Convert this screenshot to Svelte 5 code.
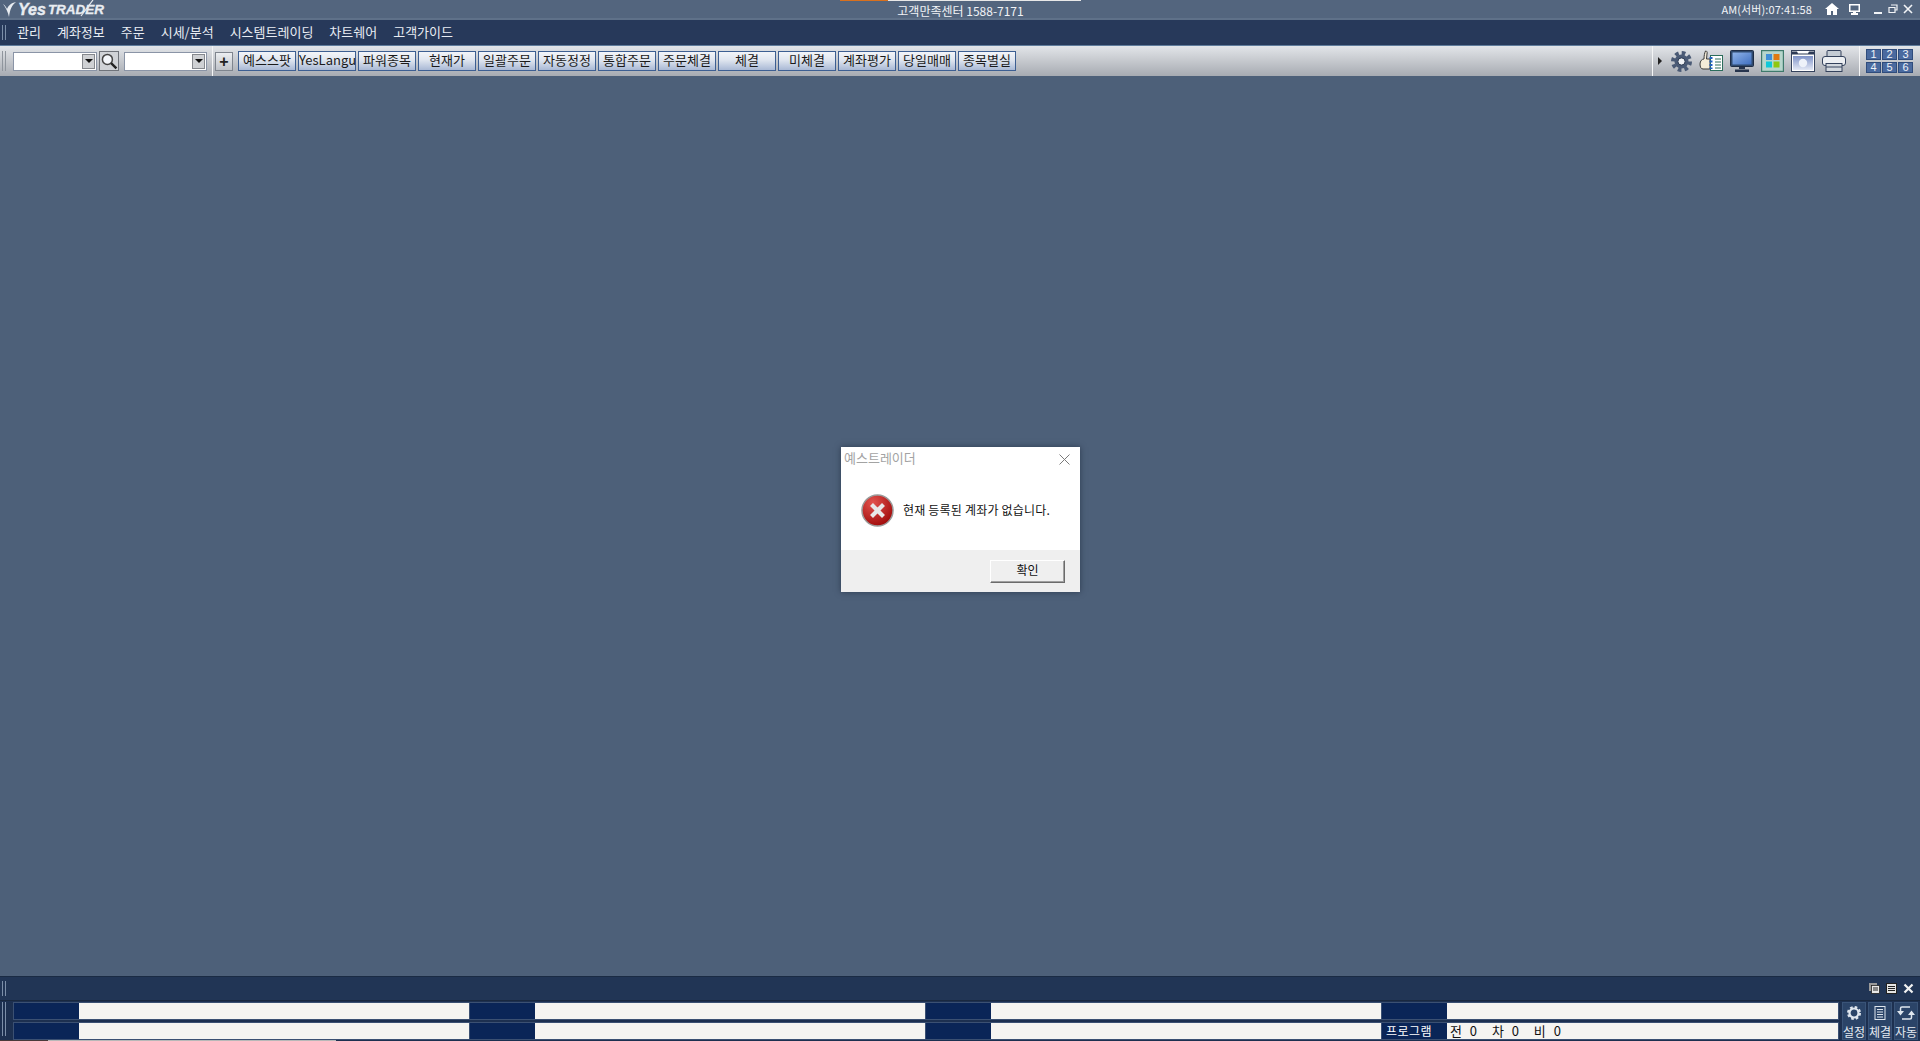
<script>
  const menus = ['관리', '계좌정보', '주문', '시세/분석', '시스템트레이딩', '차트쉐어', '고객가이드'];
  const quick = ['예스스팟', 'YesLangu', '파워종목', '현재가', '일괄주문', '자동정정', '통합주문', '주문체결', '체결', '미체결', '계좌평가', '당일매매', '종목별실'];
  const pages = [1, 2, 3, 4, 5, 6];
  const tickers = [
    [{ label: '' }, { label: '' }, { label: '' }, { label: '' }],
    [{ label: '' }, { label: '' }, { label: '' }, { label: '프로그램', value: '전 0  차 0  비 0' }]
  ];
</script>

<div class="app">
  <header class="titlebar">
    <div class="logo">
      <svg width="14" height="16" viewBox="0 0 14 16">
        <path d="M0 2c2 1 3 3 4 5 1-3 4-6 9-7-4 3-6 7-7 15C5 10 3 6 0 2z" fill="#e8ecf1"/>
      </svg>
      <span class="logo-yes">Yes</span>
      <span class="logo-trader">TRADER</span>
      <svg class="logo-slash" width="14" height="18" viewBox="0 0 14 18">
        <path d="M1 17L13 1" stroke="#e8ecf1" stroke-width="1.200" fill="none"/>
      </svg>
    </div>
    <div class="center-tab">
      <div class="tab-strip"><span class="tab-orange"></span><span class="tab-white"></span></div>
      <span class="center-text">고객만족센터 1588-7171</span>
    </div>
    <div class="sys">
      <span class="clock">AM(서버):07:41:58</span>
      <svg class="home" width="14" height="12" viewBox="0 0 14 12">
        <path d="M7 0L0 6h2v6h4V8h2v4h4V6h2z" fill="#fff"/>
      </svg>
      <svg class="screen" width="11" height="11" viewBox="0 0 11 11">
        <path d="M0 0h11v8H7v1h2v2H2V9h2V8H0zM1.500 1.500v5h8v-5z" fill="#fff"/>
      </svg>
      <svg class="win" width="10" height="10" viewBox="0 0 10 10"><path d="M1 8h8v2H1z" fill="#f2f4f7"/></svg>
      <svg class="win" width="10" height="10" viewBox="0 0 10 10"><path d="M3 1h6v5H7M1 3.500h6v5H1z" fill="none" stroke="#f2f4f7" stroke-width="1.200"/></svg>
      <svg class="win" width="10" height="10" viewBox="0 0 10 10"><path d="M1 1l8 8M9 1l-8 8" stroke="#f2f4f7" stroke-width="1.600"/></svg>
    </div>
  </header>

  <nav class="menubar">
    <span class="grip"></span>
    {#each menus as m}
      <span class="menu">{m}</span>
    {/each}
  </nav>

  <div class="toolbar">
    <span class="grip light"></span>
    <div class="combo"><span class="drop"><i></i></span></div>
    <button class="search">
      <svg width="18" height="18" viewBox="0 0 17 17">
        <circle cx="7" cy="7" r="4.700" fill="#f4f7fb" stroke="#444" stroke-width="1.400"/>
        <path d="M10.500 10.500l5 5" stroke="#222" stroke-width="2.200"/>
      </svg>
    </button>
    <div class="combo second"><span class="drop"><i></i></span></div>
    <span class="vline"></span>
    <button class="plus">+</button>
    <div class="quick">
      {#each quick as q}
        <button class="qbtn">{q}</button>
      {/each}
    </div>
    <span class="spacer"></span>
    <span class="vline"></span>
    <span class="arrow"></span>
    <div class="tools">
      <svg width="21" height="21" viewBox="0 0 21 21">
        <circle cx="10.500" cy="10.500" r="8.500" fill="none" stroke="#4a5a75" stroke-width="4" stroke-dasharray="3.600 3.070"/>
        <circle cx="10.500" cy="10.500" r="7" fill="#4a5a75"/>
        <circle cx="10.500" cy="10.500" r="3.600" fill="#f0f2f5" stroke="#2d3b52"/>
      </svg>
      <svg width="24" height="22" viewBox="0 0 24 22">
        <path d="M5 9c0-3 .5-6 1.500-8 1.500 0 2 1 1.500 3L7.500 9H11v10H4c-2 0-3-2-3-5s2-5 4-5z" fill="#f5ecd9" stroke="#3a3a3a"/>
        <rect x="11.500" y="5.500" width="12" height="15" fill="#fff" stroke="#2b6d5b"/>
        <path d="M16 9h6M16 12h6M16 15h6M16 18h6" stroke="#2b6d5b"/>
        <path d="M12 7v12" stroke="#1f5fc0" stroke-width="3" stroke-dasharray="2 1.500"/>
      </svg>
      <svg width="24" height="22" viewBox="0 0 24 22">
        <defs>
          <linearGradient id="scr" x1="0" y1="0" x2="1" y2="1">
            <stop offset="0" stop-color="#8fb3e8"/>
            <stop offset="1" stop-color="#3f6fc0"/>
          </linearGradient>
          <linearGradient id="cam" x1="0" y1="0" x2="0" y2="1">
            <stop offset="0" stop-color="#7f93c8"/>
            <stop offset="1" stop-color="#e4e9f5"/>
          </linearGradient>
        </defs>
        <rect x=".5" y=".5" width="23" height="16" rx="1" fill="#2f4a6e" stroke="#1f2d45"/>
        <rect x="2.500" y="2.500" width="19" height="12" fill="url(#scr)"/>
        <path d="M9 17h6v2H9zM5 19.500h14V22H5z" fill="#26344d"/>
      </svg>
      <svg width="23" height="22" viewBox="0 0 23 22">
        <rect x=".5" y=".5" width="22" height="21" fill="#b7d6cc" stroke="#3f7a6c" stroke-width="1.400"/>
        <rect x="5" y="4" width="6" height="6" fill="#3f8fd8"/>
        <rect x="12.500" y="4" width="6" height="6" fill="#e07a10"/>
        <rect x="5" y="11.500" width="6" height="6" fill="#10c8d8"/>
        <rect x="12.500" y="11.500" width="6" height="6" fill="#90c810"/>
      </svg>
      <svg width="24" height="22" viewBox="0 0 24 22">
        <rect x=".5" y=".5" width="23" height="21" fill="#fff" stroke="#34425c"/>
        <rect x="2" y="6" width="20" height="14" fill="url(#cam)"/>
        <path d="M1 1.500h5l1 2h10l1-2h5v3H1z" fill="#2d3a55"/>
        <circle cx="12" cy="13" r="4.200" fill="#eef2f9"/>
      </svg>
      <svg width="24" height="22" viewBox="0 0 24 22">
        <rect x="5" y=".5" width="14" height="7" rx="1" fill="#c4ccd4" stroke="#34425c"/>
        <rect x=".5" y="6.500" width="23" height="9" rx="2.500" fill="#eceff2" stroke="#34425c"/>
        <rect x="4" y="13.500" width="16" height="8" fill="#d2d8de" stroke="#34425c"/>
        <path d="M4 17h16" stroke="#34425c"/>
      </svg>
    </div>
    <span class="vline"></span>
    <div class="pages">
      {#each pages as p}
        <span class="page">{p}</span>
      {/each}
    </div>
  </div>

  <main class="desk">
    <div class="dialog">
      <div class="dlg-head">
        <span class="dlg-title">예스트레이더</span>
        <svg width="11" height="11" viewBox="0 0 11 11"><path d="M.5.500l10 10M10.500.500l-10 10" stroke="#7a7a7a" fill="none"/></svg>
      </div>
      <div class="dlg-body">
        <svg width="33" height="33" viewBox="0 0 33 33">
          <defs>
            <radialGradient id="err" cx="35%" cy="25%" r="85%">
              <stop offset="0" stop-color="#e2534e"/>
              <stop offset="1" stop-color="#9b0505"/>
            </radialGradient>
          </defs>
          <circle cx="16.500" cy="16.500" r="15.500" fill="url(#err)" stroke="#9a9a9a" stroke-width="1.500"/>
          <path d="M10.500 10.500l12 12M22.500 10.500l-12 12" stroke="#e8e8e8" stroke-width="4.200"/>
        </svg>
        <span class="dlg-msg">현재 등록된 계좌가 없습니다.</span>
      </div>
      <div class="dlg-foot">
        <button class="ok">확인</button>
      </div>
    </div>
  </main>

  <div class="dock">
    <span class="grip"></span>
    <span class="spacer"></span>
    <svg class="dock-ico" width="11" height="11" viewBox="0 0 11 11">
      <rect x="0" y="0" width="8" height="8" fill="#999"/>
      <rect x="2.500" y="2.500" width="8" height="8" fill="#e8e8e8" stroke="#222" stroke-width=".8"/>
      <path d="M4 5h5M4 7h5" stroke="#222"/>
    </svg>
    <svg class="dock-ico" width="11" height="11" viewBox="0 0 11 11">
      <rect x=".5" y=".5" width="10" height="10" fill="#e4e4e4" stroke="#222"/>
      <path d="M2 3.500h7M2 5.500h7M2 7.500h7" stroke="#222"/>
    </svg>
    <svg class="dock-ico" width="11" height="11" viewBox="0 0 11 11">
      <path d="M1.500 1.500l8 8M9.500 1.500l-8 8" stroke="#f2f2f2" stroke-width="2.200"/>
    </svg>
  </div>

  <footer class="status">
    <span class="grip tall"></span>
    <div class="rows">
      {#each tickers as row}
        <div class="row">
          {#each row as cell}
            <div class="cell">
              <span class="cell-label">{cell.label}</span>
              <span class="cell-value">{cell.value ?? ''}</span>
            </div>
          {/each}
        </div>
      {/each}
    </div>
    <div class="side">
      <div class="side-btn">
        <svg width="14" height="14" viewBox="0 0 14 14">
          <circle cx="7" cy="7" r="5.500" fill="none" stroke="#dfe6ee" stroke-width="3" stroke-dasharray="2.400 1.920"/>
          <circle cx="7" cy="7" r="4.500" fill="none" stroke="#dfe6ee" stroke-width="2.200"/>
        </svg>
        <span>설정</span>
      </div>
      <div class="side-btn">
        <svg width="14" height="14" viewBox="0 0 14 14">
          <rect x="2" y=".5" width="10" height="13" fill="none" stroke="#dfe6ee"/>
          <path d="M4 3.500h6M4 6h6M4 8.500h6M4 11h6" stroke="#dfe6ee"/>
        </svg>
        <span>체결</span>
      </div>
      <div class="side-btn">
        <svg width="18" height="14" viewBox="0 0 18 14">
          <path d="M3.500 5V2.500a1.500 1.500 0 0 1 1.500-1.500h8M14.500 9v2.500a1.500 1.500 0 0 1-1.500 1.500H5" fill="none" stroke="#dfe6ee" stroke-width="1.500"/>
          <path d="M0 5h7L3.500 9.500zM11 9h7L14.500 4.500z" fill="#dfe6ee"/>
        </svg>
        <span>자동</span>
      </div>
    </div>
  </footer>
  <div class="baseline"><span class="seg-brown"></span><span class="seg-gray"></span></div>
</div>

<style>
  :global(body) {
    margin: 0;
    background: #4d6079;
    overflow: hidden;
  }

  .app {
    height: 1041px;
    display: flex;
    flex-direction: column;
    font-family: "Noto Sans CJK KR", "Liberation Sans", sans-serif;
    font-size: 13px;
    overflow: hidden;
  }

  .titlebar {
    height: 20px;
    flex-shrink: 0;
    display: flex;
    align-items: center;
    position: relative;
    background: #53657e;
    border-bottom: 2px solid #5f7189;
    box-sizing: border-box;
  }

  .logo {
    display: flex;
    align-items: center;
    padding-left: 3px;
    padding-top: 1px;
    color: #e8ecf1;
    font-family: "Liberation Sans", sans-serif;
    font-style: italic;
    font-weight: 700;
    position: relative;
  }

  .logo svg {
    margin-right: 1px;
  }

  .logo-yes {
    font-size: 16px;
    line-height: 17px;
    margin-right: 2px;
    -webkit-text-stroke: .4px #e8ecf1;
  }

  .logo-trader {
    font-size: 13.500px;
    line-height: 17px;
    -webkit-text-stroke: .3px #e8ecf1;
  }

  .logo .logo-slash {
    position: absolute;
    left: 80px;
    top: -1px;
  }

  .center-tab {
    position: absolute;
    left: 840px;
    top: 0;
    width: 241px;
    display: flex;
    flex-direction: column;
    align-items: center;
  }

  .tab-strip {
    width: 100%;
    height: 1px;
    display: flex;
  }

  .tab-orange {
    width: 48px;
    background: #d8701e;
  }

  .tab-white {
    flex: 1;
    background: #e8e8e8;
  }

  .center-text {
    margin-top: 2px;
    color: #f1f3f6;
    font-size: 12px;
    line-height: 16px;
  }

  .sys {
    margin-left: auto;
    display: flex;
    align-items: center;
    padding-right: 7px;
    color: #f1f3f6;
  }

  .clock {
    margin-right: 13px;
    font-size: 11px;
    letter-spacing: .1px;
  }

  .home {
    margin-right: 10px;
  }

  .screen {
    margin-right: 13px;
  }

  .win {
    margin-left: 5px;
  }

  .win:nth-of-type(3) {
    margin-left: 0;
  }

  .menubar {
    height: 26px;
    flex-shrink: 0;
    display: flex;
    align-items: center;
    gap: 16px;
    background: #27395a;
    color: #e9edf3;
    box-sizing: border-box;
    border-bottom: 1px solid #5f7c9c;
  }

  .menu {
    line-height: 22px;
    padding-bottom: 2px;
  }

  .grip {
    width: 4px;
    height: 15px;
    margin-left: 2px;
    margin-right: -5px;
    flex-shrink: 0;
    border-left: 1px solid #7b8ea8;
    border-right: 1px solid #7b8ea8;
    box-sizing: border-box;
  }

  .grip.light {
    height: 20px;
    margin-right: 0;
    border-color: #8f959d;
  }

  .grip.tall {
    height: 34px;
    margin-right: 0;
    margin-left: 2px;
  }

  .toolbar {
    height: 30px;
    flex-shrink: 0;
    display: flex;
    align-items: center;
    background: linear-gradient(#e2e5e9, #c8cbd0 45%, #a7abb2);
    box-sizing: border-box;
  }

  .combo {
    width: 84px;
    height: 19px;
    margin-left: 7px;
    background: #fff;
    border: 1px solid #8a94a6;
    box-sizing: border-box;
    display: flex;
    justify-content: flex-end;
    align-items: center;
    padding-right: 1px;
  }

  .combo.second {
    width: 83px;
    margin-left: 5px;
  }

  .drop {
    width: 13px;
    height: 15px;
    background: #cfd1d4;
    border: 1px solid #85888d;
    box-sizing: border-box;
    display: flex;
    align-items: center;
    justify-content: center;
  }

  .drop i {
    border-left: 4px solid transparent;
    border-right: 4px solid transparent;
    border-top: 4px solid #111;
  }

  .search {
    width: 20px;
    height: 20px;
    margin-left: 2px;
    padding: 0;
    background: #d0d3d7;
    border: 1px solid #6f737a;
    display: flex;
    align-items: center;
    justify-content: center;
  }

  .vline {
    width: 1px;
    height: 30px;
    background: #f4f5f6;
    flex-shrink: 0;
  }

  .combo.second + .vline {
    margin-left: 5px;
  }

  .plus {
    width: 18px;
    height: 19px;
    margin-left: 2px;
    padding: 0;
    background: linear-gradient(#eceef1, #bfc3c9);
    border: 1px solid #7f858e;
    font: 700 16px/15px "Liberation Sans", sans-serif;
    color: #222;
  }

  .quick {
    display: flex;
    gap: 2px;
    margin-left: 5px;
  }

  .qbtn {
    width: 58px;
    height: 20px;
    padding: 0 0 2px;
    background: linear-gradient(#f3f5f9, #dfe5ef 45%, #a9b9d5);
    border: 1px solid #3d5f92;
    color: #1a1a1a;
    font-family: "Noto Sans CJK KR", "Liberation Sans", sans-serif;
    font-size: 13px;
    line-height: 16px;
    white-space: nowrap;
  }

  .spacer {
    flex: 1;
  }

  .arrow {
    width: 0;
    height: 0;
    margin-left: 5px;
    border-left: 4px solid #222;
    border-top: 4px solid transparent;
    border-bottom: 4px solid transparent;
  }

  .tools {
    display: flex;
    align-items: center;
    gap: 7px;
    margin-left: 9px;
    margin-right: 13px;
  }

  .pages {
    display: grid;
    grid-template-columns: repeat(3, 15px);
    grid-auto-rows: 11px;
    gap: 2px 1px;
    margin-left: 6px;
    margin-right: 7px;
  }

  .page {
    display: flex;
    align-items: center;
    justify-content: center;
    background: #4a6a9f;
    border: 1px solid #2f4c7c;
    box-sizing: border-box;
    color: #eef2f8;
    font: 11px/9px "Liberation Sans", sans-serif;
  }

  .desk {
    flex: 1;
    position: relative;
    background: #4d6079;
  }

  .dialog {
    position: absolute;
    left: 841px;
    top: 371px;
    width: 239px;
    height: 145px;
    display: flex;
    flex-direction: column;
    background: #fff;
    box-shadow: 0 0 6px rgba(20, 30, 45, .55);
  }

  .dlg-head {
    height: 24px;
    display: flex;
    align-items: center;
    justify-content: space-between;
    padding: 0 10px 0 3px;
  }

  .dlg-title {
    color: #a3a3a3;
    font-size: 13px;
    line-height: 20px;
    padding-bottom: 3px;
  }

  .dlg-body {
    flex: 1;
    display: flex;
    align-items: center;
    padding-left: 20px;
    gap: 9px;
  }

  .dlg-msg {
    color: #111;
    font-size: 12px;
    letter-spacing: .2px;
    line-height: 18px;
    padding-bottom: 2px;
  }

  .dlg-foot {
    height: 42px;
    background: #efefef;
    display: flex;
    justify-content: flex-end;
    align-items: center;
    padding-right: 15px;
  }

  .ok {
    width: 75px;
    height: 23px;
    padding: 0 0 3px;
    background: #efefef;
    border: 1px solid;
    border-color: #fff #6b6b6b #6b6b6b #fff;
    box-shadow: inset -1px -1px 0 #a0a0a0;
    color: #111;
    font-family: "Noto Sans CJK KR", sans-serif;
    font-size: 12px;
    line-height: 16px;
  }

  .dock {
    height: 25px;
    flex-shrink: 0;
    display: flex;
    align-items: center;
    gap: 6px;
    padding-right: 6px;
    background: #213555;
    border-top: 1px solid #1a2b44;
    border-bottom: 1px solid #19283f;
    box-sizing: border-box;
  }

  .dock .grip {
    margin-right: 0;
  }

  .status {
    height: 39px;
    flex-shrink: 0;
    display: flex;
    align-items: flex-start;
    padding-top: 1px;
    box-sizing: border-box;
    background: #1d3050;
  }

  .rows {
    flex: 1;
    display: flex;
    flex-direction: column;
    gap: 2px;
    margin-left: 7px;
    min-width: 0;
    height: 38px;
  }

  .row {
    display: grid;
    grid-template-columns: repeat(3, 456px) 458px;
    height: 18px;
    flex-shrink: 0;
  }

  .cell {
    display: flex;
    min-width: 0;
    border: 1px solid #3b5072;
    border-right: none;
    box-sizing: border-box;
    background: #f5f4f1;
  }

  .cell:last-child {
    border-right: 1px solid #3b5072;
  }

  .cell-label {
    width: 65px;
    flex-shrink: 0;
    padding-left: 4px;
    box-sizing: border-box;
    background: #0a2557;
    color: #fff;
    font-size: 12px;
    letter-spacing: .5px;
    line-height: 16px;
  }

  .cell-value {
    flex: 1;
    padding-left: 3px;
    color: #111;
    line-height: 16px;
    white-space: pre;
    letter-spacing: 1px;
    word-spacing: 3px;
  }

  .side {
    display: flex;
    gap: 2px;
    margin-left: 3px;
    margin-right: 2px;
  }

  .side-btn {
    width: 24px;
    height: 38px;
    box-sizing: border-box;
    display: flex;
    flex-direction: column;
    align-items: center;
    justify-content: space-between;
    padding: 3px 0 0;
    background: #2b4468;
    border: 1px solid #3a5478;
    color: #e6ebf2;
    font-size: 12px;
    line-height: 15px;
    white-space: nowrap;
  }

  .baseline {
    height: 1px;
    flex-shrink: 0;
    display: flex;
    background: #1d3050;
  }

  .seg-brown {
    width: 48px;
    background: #4a3a3a;
  }

  .seg-gray {
    width: 288px;
    background: #b8b8b8;
  }
</style>
